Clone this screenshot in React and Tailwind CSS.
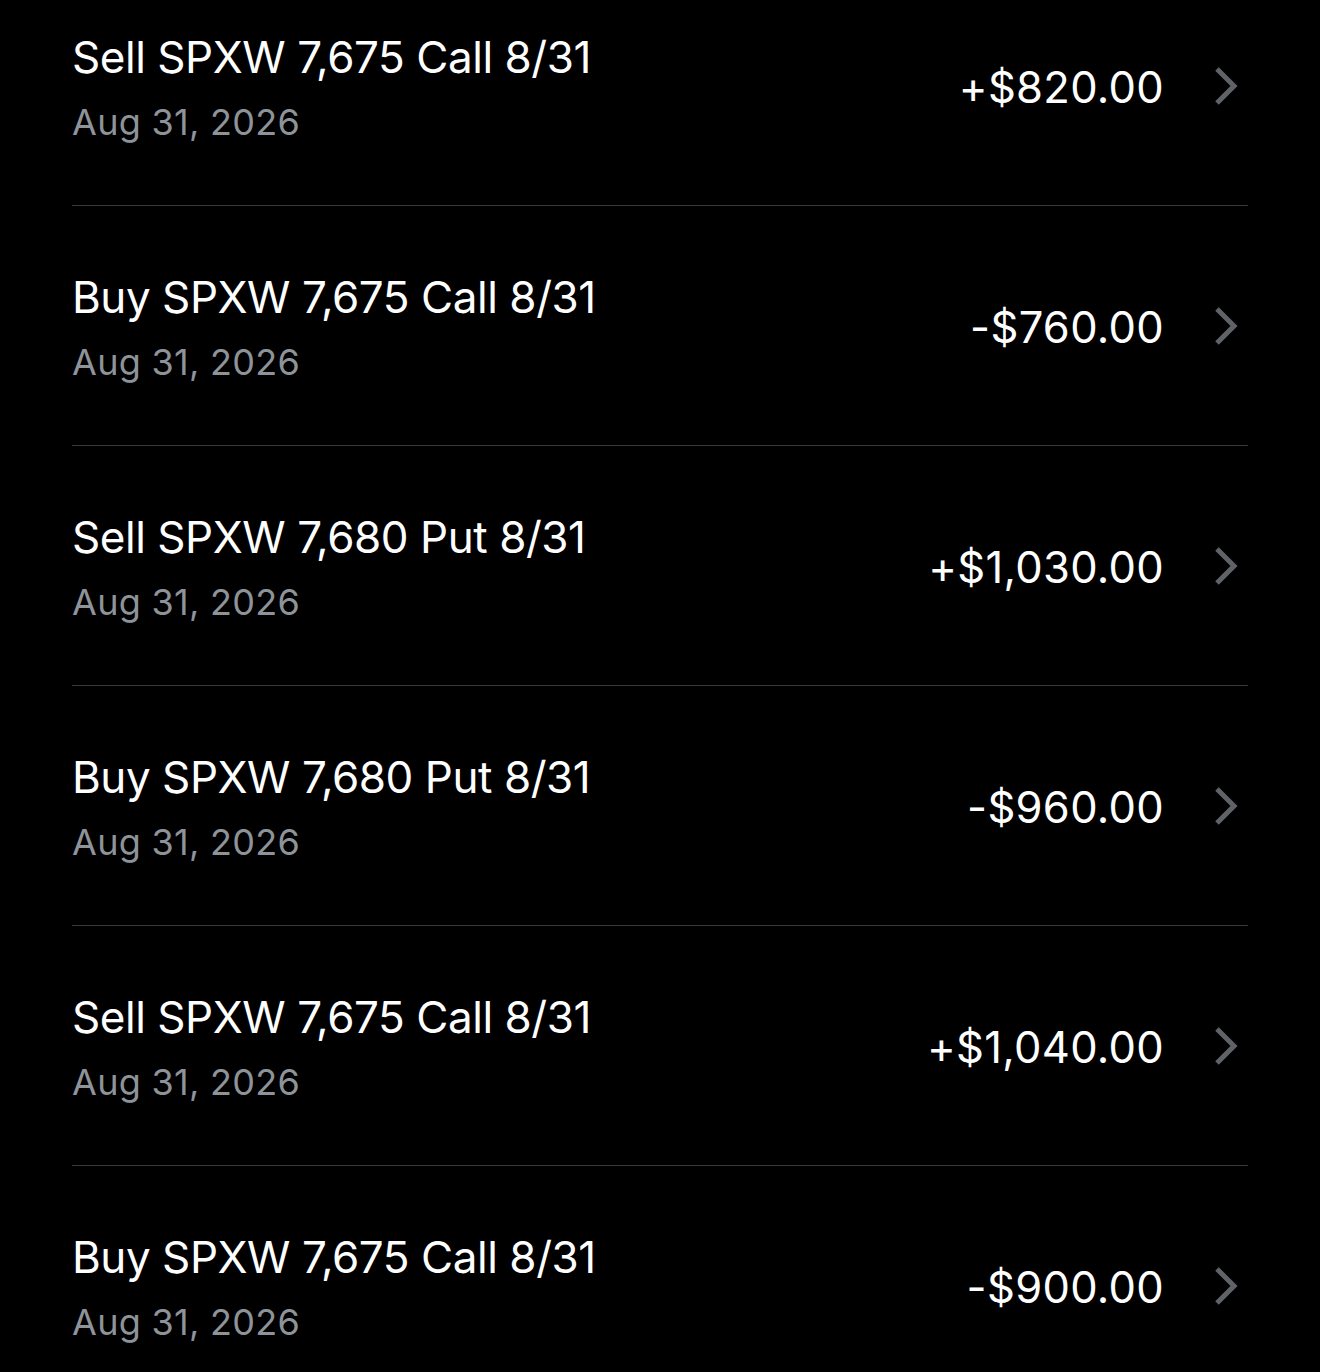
const rows = [
  { title: 'Sell SPXW 7,675 Call 8/31', amount: '+$820.00' },
  { title: 'Buy SPXW 7,675 Call 8/31', amount: '-$760.00' },
  { title: 'Sell SPXW 7,680 Put 8/31', amount: '+$1,030.00' },
  { title: 'Buy SPXW 7,680 Put 8/31', amount: '-$960.00' },
  { title: 'Sell SPXW 7,675 Call 8/31', amount: '+$1,040.00' },
  { title: 'Buy SPXW 7,675 Call 8/31', amount: '-$900.00' },
];

function Chevron() {
  return (
    <svg className="w-[28px] h-[40px] text-[#5f6368]" viewBox="0 0 28 40" fill="none" stroke="currentColor">
      <path d="M5 3l17 17L5 37" strokeWidth={5} strokeLinecap="butt" strokeLinejoin="miter" />
    </svg>
  );
}

export default function App() {
  return (
    <div className="min-h-[1372px] bg-black overflow-hidden font-['Inter',sans-serif]">
      <div className="px-[72px] -mt-[34px]">
        {rows.map((r, i) => (
          <div key={i} className="h-[240px] flex items-center justify-between border-b border-[#3a3a3a]">
            <div className="flex flex-col pt-[5px]">
              <span className="text-[44px] leading-[50px] text-white tracking-[-0.45px]">{r.title}</span>
              <span className="mt-[18px] text-[36px] leading-[44px] text-[#8e939a] tracking-[0.3px]">Aug 31, 2026</span>
            </div>
            <div className="flex items-center gap-[48px] pr-[8px]">
              <span className="pt-[3px] text-[43.5px] leading-[50px] text-white tracking-[0.3px]">{r.amount}</span>
              <Chevron />
            </div>
          </div>
        ))}
      </div>
    </div>
  );
}
